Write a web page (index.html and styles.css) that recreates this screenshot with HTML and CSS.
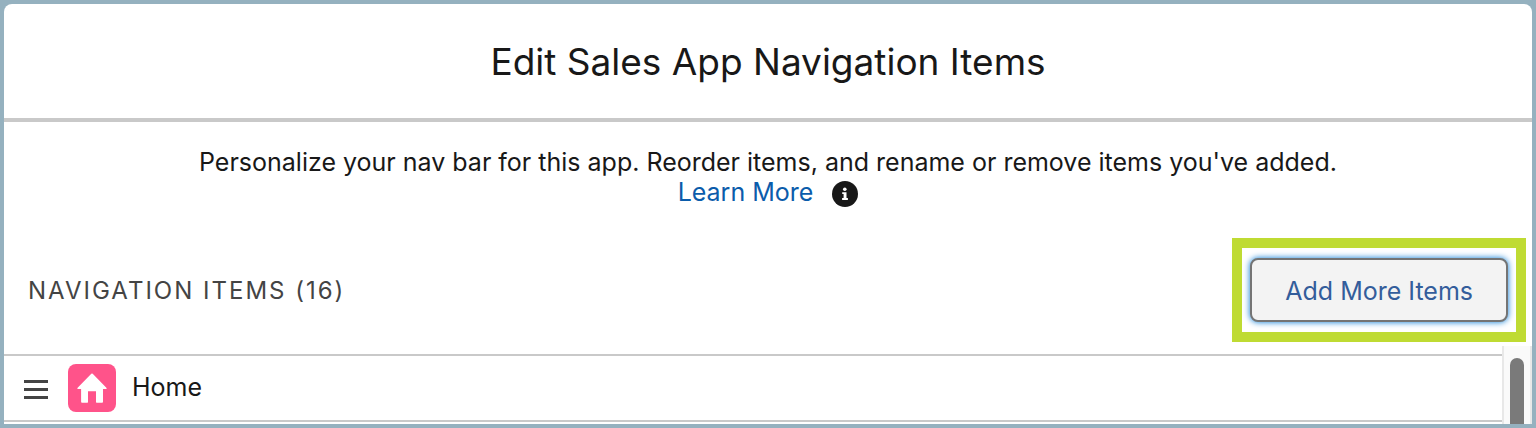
FILE: index.html
```html
<!DOCTYPE html>
<html lang="en">
<head>
  <meta charset="UTF-8">
  <title>Edit Sales App Navigation Items</title>
  <link rel="stylesheet" href="styles.css">
</head>
<body>
  <div class="modal">
    <header class="modal-header">
      <h1>Edit Sales App Navigation Items</h1>
    </header>

    <div class="intro">
      <p>Personalize your nav bar for this app. Reorder items, and rename or remove items you've added.</p>
      <p class="learn">
        <a href="#">Learn More</a>
        <svg class="info-icon" viewBox="0 0 26 26" aria-hidden="true">
          <circle cx="13" cy="13" r="13" fill="#181818"/>
          <circle cx="12.8" cy="8.3" r="1.8" fill="#fff"/>
          <path d="M10.2 11.2h4.3v5.8h1.4v1.9h-5.8V17h1.5v-3.9h-1.4z" fill="#fff"/>
        </svg>
      </p>
    </div>

    <div class="toolbar">
      <h2>NAVIGATION ITEMS (16)</h2>
      <div class="highlight">
        <button type="button" class="add-button">Add More Items</button>
      </div>
    </div>

    <div class="list">
      <ul class="items">
        <li>
          <svg class="drag-icon" viewBox="0 0 24 20" aria-hidden="true">
            <path d="M0 0h24v3H0zM0 8h24v3H0zM0 16h24v3H0z" fill="#444"/>
          </svg>
          <svg class="home-icon" viewBox="0 0 48 48" aria-hidden="true">
            <rect width="48" height="48" rx="8" fill="#ff538a"/>
            <path d="M23.3 9.8q.7-.7 1.400 0L38.600 24.100q.4.7-.4.900H35v12.800q0 .9-.9.900h-5.500q-.6 0-.6-.6V27.300h-8v10.800q0 .6-.6.6H14q-.9 0-.9-.9V25H9.800q-.8-.2-.4-.9z" fill="#fff"/>
          </svg>
          <span>Home</span>
        </li>
      </ul>
      <div class="scrollbar">
        <div class="thumb"></div>
      </div>
    </div>
  </div>
</body>
</html>
```
FILE: styles.css
```css
* {
  box-sizing: border-box;
}

body {
  margin: 0;
  height: 100vh;
  padding: 4px;
  overflow: hidden;
  background: #95b1bf;
  color: #181818;
  font-family: Inter, "Liberation Sans", sans-serif;
  font-size: 25px;
  line-height: 30px;
}

h1, h2, p, ul {
  margin: 0;
  padding: 0;
  font-weight: 400;
}

.modal {
  display: flex;
  flex-direction: column;
  height: 100%;
  overflow: hidden;
  background: #fff;
  border-radius: 8px 8px 0 0;
}

/* Header */
.modal-header {
  padding: 34px 24px 32px;
  border-bottom: 4px solid #c9c9c9;
  text-align: center;
}

.modal-header h1 {
  font-size: 37px;
  line-height: 48px;
}

/* Help text */
.intro {
  padding: 25px 24px 31px;
  text-align: center;
}

.learn {
  display: flex;
  justify-content: center;
  align-items: flex-end;
  gap: 19px;
}

.learn a {
  color: #0b5cab;
  text-decoration: none;
}

.info-icon {
  width: 26px;
  height: 26px;
}

/* Title row and button */
.toolbar {
  display: flex;
  justify-content: space-between;
  align-items: center;
  padding: 0 6px 0 24px;
}

.toolbar h2 {
  padding-top: 2px;
  color: #444;
  font-size: 24px;
  letter-spacing: 2px;
}

.highlight {
  padding: 10px 8px;
  border: 10px solid #bfdb33;
}

.add-button {
  display: block;
  height: 64px;
  padding: 2px 33px 0;
  border: 2px solid #747474;
  border-radius: 8px;
  background: #f3f3f3;
  box-shadow: 0 0 6px #0176d3;
  color: #335d9b;
  font: inherit;
}

/* Items list */
.list {
  display: flex;
  flex: 1;
  margin-top: 4px;
  min-height: 0;
}

.items {
  flex: 1;
  padding-top: 8px;
  list-style: none;
}

.items li {
  display: flex;
  align-items: center;
  height: 68px;
  padding-left: 20px;
  border: solid #c9c9c9;
  border-width: 2px 0;
}

.items span {
  padding-bottom: 2px;
}

.drag-icon {
  width: 24px;
  height: 20px;
  margin: 4px 20px 0 0;
}

.home-icon {
  width: 48px;
  height: 48px;
  margin-right: 16px;
}

.scrollbar {
  width: 30px;
  padding: 12px 6px 0;
  border: solid #e8e8e8;
  border-width: 0 2px;
  background: #fafafa;
}

.thumb {
  width: 14px;
  height: 100%;
  border-radius: 7px 7px 0 0;
  background: #7a7a7a;
}
```
